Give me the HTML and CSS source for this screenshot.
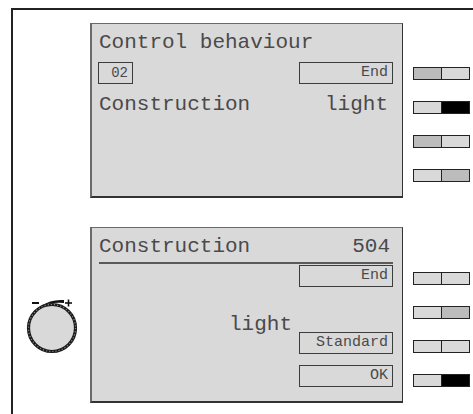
FILE: index.html
```html
<!DOCTYPE html>
<html>
<head>
<meta charset="utf-8">
<link rel="stylesheet" href="styles.css">
</head>
<body>
<div class="frame">
  <div class="side"></div>
  <div class="panel panel-top">
    <div class="title">Control behaviour</div>
    <div class="row r-boxes"><span class="box box-num">02</span><span class="box box-wide">End</span></div>
    <div class="row r-value"><span>Construction</span><span class="val-top">light</span></div>
  </div>
  <div class="keys keys-top">
    <div class="key"><span class="half mid"></span><span class="half"></span></div>
    <div class="key"><span class="half"></span><span class="half dark"></span></div>
    <div class="key"><span class="half mid"></span><span class="half"></span></div>
    <div class="key"><span class="half"></span><span class="half mid"></span></div>
  </div>

  <div class="side side-knob">
    <svg class="knob" width="60" height="64" viewBox="0 0 60 64">
      <line x1="10" y1="10" x2="17" y2="10" stroke="#111" stroke-width="2"/>
      <path d="M19 13 Q29 6 42 7 L42 10 Q29 9 19 13 Z" fill="#111"/>
      <line x1="43" y1="10" x2="50" y2="10" stroke="#111" stroke-width="1.6"/>
      <line x1="46.5" y1="6.5" x2="46.5" y2="13.5" stroke="#111" stroke-width="1.6"/>
      <circle cx="30" cy="35" r="23.5" fill="#d9d9d9" stroke="#1a1a1a" stroke-width="3.2"/>
      <circle cx="30" cy="35" r="23.5" fill="none" stroke="#8a8a8a" stroke-width="1.2" stroke-dasharray="1.2 2"/>
    </svg>
  </div>
  <div class="panel panel-bottom">
    <div class="title row"><span>Construction</span><span class="val-num">504</span></div>
    <div class="rule"></div>
    <div class="row r-end"><span class="box box-wide">End</span></div>
    <div class="row r-light"><span class="light-text">light</span><span class="box box-wide box-std">Standard</span></div>
    <div class="row r-ok"><span class="box box-wide">OK</span></div>
  </div>
  <div class="keys keys-bottom">
    <div class="key"><span class="half"></span><span class="half"></span></div>
    <div class="key"><span class="half"></span><span class="half mid"></span></div>
    <div class="key"><span class="half"></span><span class="half"></span></div>
    <div class="key"><span class="half"></span><span class="half dark"></span></div>
  </div>
</div>
</body>
</html>
```
FILE: styles.css
```css
html, body {
  margin: 0;
  padding: 0;
  background: #fff;
  overflow: hidden;
}
body {
  width: 473px;
  height: 414px;
  font-family: "Courier New", "Nimbus Mono PS", "FreeMono", "Liberation Mono", monospace;
  color: #4a4a4a;
}
.frame {
  box-sizing: border-box;
  margin: 8px 0 0 11px;
  width: 462px;
  height: 406px;
  border-top: 2px solid #222;
  border-left: 2px solid #222;
  padding-top: 13px;
  display: grid;
  grid-template-columns: 77px 313px 57px;
  grid-template-rows: 175px 176px;
  row-gap: 29px;
  align-content: start;
}
.panel {
  background: #d9d9d9;
  border-left: 2px solid #6a6a6a;
  border-top: 1px solid #6a6a6a;
  border-right: 1px solid #333;
  border-bottom: 2px solid #333;
  padding: 0 9px 0 7px;
  display: flex;
  flex-direction: column;
}
.title {
  font-size: 21px;
  line-height: 24px;
  padding-top: 7px;
  white-space: pre;
}
.row {
  display: flex;
  justify-content: space-between;
  font-size: 21px;
  line-height: 24px;
}
.r-boxes { margin-top: 7px; }
.r-value { margin-top: 9px; }
.val-top { margin-right: 5px; }
.val-num { margin-right: 3px; }
.box {
  box-sizing: border-box;
  height: 22px;
  border: 1px solid #3c3c3c;
  font-size: 15px;
  line-height: 20px;
  text-align: right;
  padding-right: 4px;
  color: #4a4a4a;
}
.box-num {
  width: 35px;
  font-size: 14px;
  padding-right: 4px;
  margin-left: -1px;
}
.box-wide { width: 94px; }
.rule {
  height: 2px;
  background: #5a5a5a;
  margin-top: 3px;
}
.r-end { justify-content: flex-end; margin-top: 1px; }
.r-light {
  justify-content: flex-end;
  align-items: flex-start;
  margin-top: 26px;
}
.light-text { margin-right: 7px; }
.box-std { margin-top: 19px; }
.r-ok { justify-content: flex-end; margin-top: 11px; }

.keys {
  display: flex;
  flex-direction: column;
  gap: 21px;
  margin-left: 10px;
}
.keys-top { padding-top: 44px; }
.keys-bottom { padding-top: 45px; }
.key {
  box-sizing: border-box;
  width: 57px;
  height: 13px;
  border: 1px solid #222;
  display: flex;
  background: #d9d9d9;
}
.half {
  flex: 1;
  background: #d9d9d9;
}
.half + .half { border-left: 1px solid #222; }
.half.mid { background: #bcbcbc; }
.half.dark { background: #000; }

.side-knob {
  display: flex;
  align-items: flex-start;
}
.knob {
  display: block;
  margin: 66px 0 0 9px;
}
```
